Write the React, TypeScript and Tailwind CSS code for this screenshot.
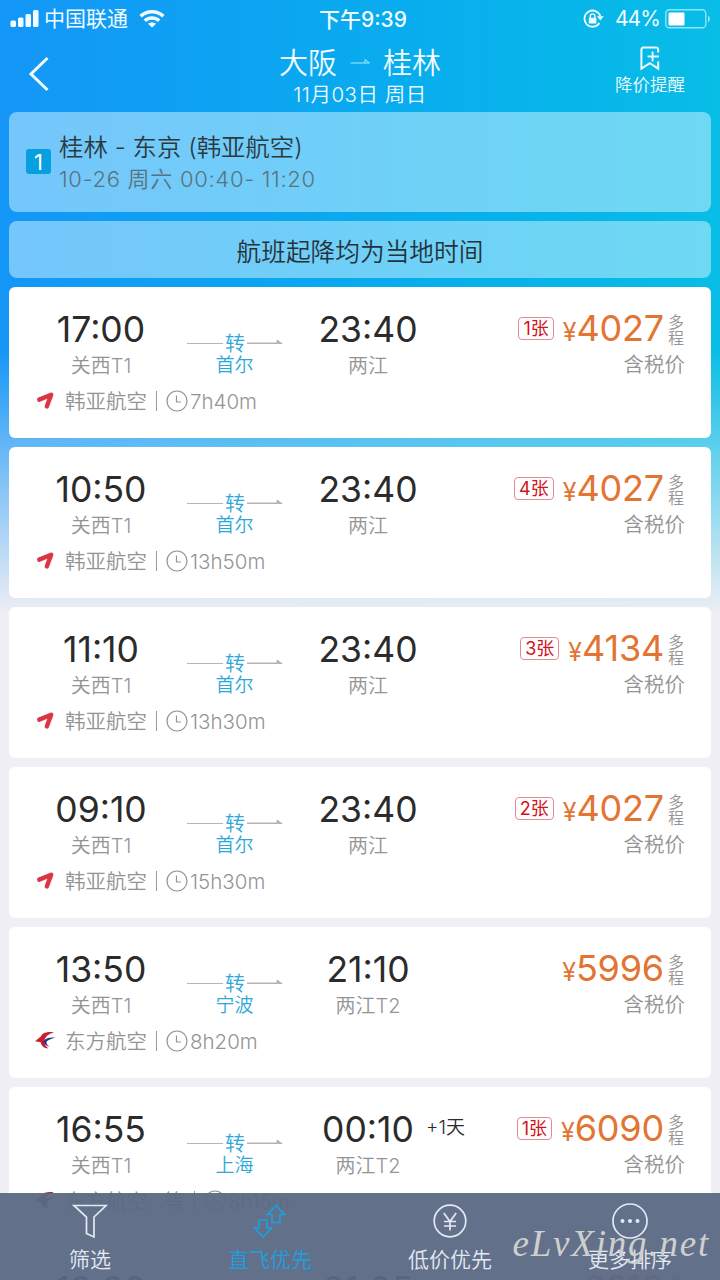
import React from "react";

interface Flight {
  depart: string;
  departAirport: string;
  via: string;
  arrive: string;
  arriveAirport: string;
  nextDay?: boolean;
  tickets?: number;
  price: string;
  airline: string;
  logo: "asiana" | "eastern";
  duration: string;
}

const flights: Flight[] = [
  { depart: "17:00", departAirport: "关西T1", via: "首尔", arrive: "23:40", arriveAirport: "两江", tickets: 1, price: "4027", airline: "韩亚航空", logo: "asiana", duration: "7h40m" },
  { depart: "10:50", departAirport: "关西T1", via: "首尔", arrive: "23:40", arriveAirport: "两江", tickets: 4, price: "4027", airline: "韩亚航空", logo: "asiana", duration: "13h50m" },
  { depart: "11:10", departAirport: "关西T1", via: "首尔", arrive: "23:40", arriveAirport: "两江", tickets: 3, price: "4134", airline: "韩亚航空", logo: "asiana", duration: "13h30m" },
  { depart: "09:10", departAirport: "关西T1", via: "首尔", arrive: "23:40", arriveAirport: "两江", tickets: 2, price: "4027", airline: "韩亚航空", logo: "asiana", duration: "15h30m" },
  { depart: "13:50", departAirport: "关西T1", via: "宁波", arrive: "21:10", arriveAirport: "两江T2", price: "5996", airline: "东方航空", logo: "eastern", duration: "8h20m" },
  { depart: "16:55", departAirport: "关西T1", via: "上海", arrive: "00:10", arriveAirport: "两江T2", nextDay: true, tickets: 1, price: "6090", airline: "东方航空...等", logo: "eastern", duration: "8h15m" },
  { depart: "12:20", departAirport: "关西T1", via: "上海", arrive: "21:05", arriveAirport: "两江T2", price: "6210", airline: "东方航空", logo: "eastern", duration: "8h45m" },
];

const StatusBar = () => (
  <div className="flex h-[37px] items-center justify-between pr-[9px] pl-[10px] text-[20px] leading-none">
    <div className="flex w-[240px] items-center">
      <svg width="29" height="18" viewBox="0 0 29 18" fill="currentColor">
        <rect x="0.5" y="10.5" width="5.5" height="6.5" rx="1.5" />
        <rect x="8" y="7.5" width="5.5" height="9.5" rx="1.5" />
        <rect x="15.5" y="4" width="5.5" height="13" rx="1.5" />
        <rect x="23" y="0" width="5.5" height="17" rx="1.5" />
      </svg>
      <span className="ml-[5px] text-[21px]">中国联通</span>
      <svg className="ml-[11px]" width="26" height="18" viewBox="0 0 26 18" fill="none" stroke="currentColor" strokeWidth="3.4">
        <path d="M1.6 6.2C8 0.3 18 0.3 24.4 6.2" />
        <path d="M5.8 10.8C10 7 16 7 20.2 10.8" />
        <path d="M13 17.5L8.9 13.8C11.2 11.9 14.8 11.9 17.1 13.8Z" fill="currentColor" stroke="none" />
      </svg>
    </div>
    <div className="pt-px pl-[5px] text-[21px] font-medium">下午9:39</div>
    <div className="flex w-[240px] items-center justify-end">
      <svg width="22" height="20" viewBox="0 0 22 20" fill="none" stroke="currentColor" strokeWidth="1.8">
        <path d="M17.3 7.2A8.1 8.1 0 1 0 16.4 14" />
        <path d="M13.8 7.2H20.6L17.4 11.4Z" fill="currentColor" stroke="none" />
        <rect x="5.8" y="8.8" width="7.6" height="5.6" rx="0.6" fill="currentColor" stroke="none" />
        <path d="M7.3 9V7.2a2.3 2.3 0 0 1 4.6 0V9" strokeWidth="1.4" />
      </svg>
      <span className="ml-[10px] text-[21px] tracking-[-0.9px]">44%</span>
      <svg className="ml-[5px]" width="46" height="20" viewBox="0 0 46 20" fill="none">
        <rect x="0.8" y="0.8" width="40" height="18" rx="3.6" stroke="#8be6fa" strokeWidth="1.4" />
        <rect x="3.5" y="3.5" width="16" height="13" rx="1" fill="#fff" />
        <path d="M43 6.5c2.6 1.5 2.6 5.5 0 7Z" fill="#8be6fa" />
      </svg>
    </div>
  </div>
);

const Header = () => (
  <div className="flex h-[75px] items-start justify-between">
    <div className="w-[140px] pt-[19px] pl-[28px]">
      <svg width="22" height="36" viewBox="0 0 22 36" fill="none" stroke="currentColor" strokeWidth="3">
        <path d="M19.5 2L3 18L19.5 34" />
      </svg>
    </div>
    <div className="flex flex-col items-center pt-[2px]">
      <div className="flex h-[46px] items-center pt-[4px] text-[29px] font-[350]">
        <span>大阪</span>
        <svg className="mx-[13px] mb-[5px]" width="20" height="6" viewBox="0 0 20 6" fill="none" stroke="#a5ecff">
          <path d="M0.5 4H19.5L15 0.5V4" />
        </svg>
        <span>桂林</span>
      </div>
      <div className="-mt-[2px] h-[24px] text-[20.5px] leading-[24px] font-[350] tracking-[0.5px]">11月03日 周日</div>
    </div>
    <div className="flex w-[140px] flex-col items-center pt-[9px]">
      <svg width="22" height="25" viewBox="0 0 22 25" fill="none" stroke="currentColor" strokeWidth="2">
        <path d="M19.2 6.5V3.4a1.8 1.8 0 0 0-1.8-1.8H4.2a1.8 1.8 0 0 0-1.8 1.8V22.7L10.8 17.2L19.2 22.7V15.5" />
        <path d="M13.6 5.5V15.5M8.6 10.5H20" strokeWidth="1.8" />
      </svg>
      <span className="mt-[2px] text-[17.5px] leading-[24px] font-[350]">降价提醒</span>
    </div>
  </div>
);

const AirlineLogo = ({ logo }: { logo: Flight["logo"] }) =>
  logo === "asiana" ? (
    <svg width="21" height="20" viewBox="0 0 21 20" fill="none" stroke="#dc3545" strokeWidth="4.4" strokeLinejoin="round" strokeLinecap="round">
      <path d="M4.2 8.6L16.2 3.8L11.8 15.4" />
    </svg>
  ) : (
    <svg width="21" height="20" viewBox="0 0 21 20">
      <path d="M19 1.3C14 0.8 8 1 5.8 5.4L0 10.2L5.6 11.2C6.4 15 9 17.2 13.5 17.4C10.6 15.2 9 12.8 9.3 10.3C9.7 6 13.5 3 19 1.3Z" fill="#c8202b" />
      <path d="M20.5 6.6C15 6.2 9.5 7.6 8.6 10.6C8.6 13 11 14.8 14.4 15.7C11.6 13.2 10.6 11.4 12.2 10C14 8.4 17.5 7.9 20.5 6.6Z" fill="#2b2f86" />
    </svg>
  );

const Transfer = ({ city }: { city: string }) => (
  <div className="flex w-[96px] flex-col items-center text-[19px] leading-[22px] font-[350] text-[#2ba8d8]">
    <div className="flex items-center">
      <span className="h-[1.5px] w-[36px] bg-[#b5b5b5]" />
      <span className="mr-[2px] ml-[2px] pt-px text-[20px]">转</span>
      <svg width="36" height="7" viewBox="0 0 36 7" fill="#b5b5b5">
        <path d="M0 2.4H29.5V-1L36 3.9H0Z" />
      </svg>
    </div>
    <span className="mr-px">{city}</span>
  </div>
);

const FlightCard = ({ flight }: { flight: Flight }) => (
  <div className="h-[151px] shrink-0 rounded-md bg-white pt-[23px] text-[#949494]">
    <div className="flex">
      <div className="flex w-[184px] flex-col items-center">
        <span className="text-[35.5px] leading-[39px] text-[#2b2b2b]">{flight.depart}</span>
        <span className="mt-[5px] text-[20px] leading-[24px] font-[350]">{flight.departAirport}</span>
      </div>
      <div className="-ml-[6px] pt-[22px]">
        <Transfer city={flight.via} />
      </div>
      <div className="relative ml-[5px] flex w-[160px] flex-col items-center">
        <span className="text-[35.5px] leading-[39px] text-[#2b2b2b]">{flight.arrive}</span>
        <span className="mt-[5px] text-[20px] leading-[24px] font-[350]">{flight.arriveAirport}</span>
        {flight.nextDay && (
          <span className="absolute top-[6px] left-[138px] text-[19px] leading-[24px] font-[350] whitespace-nowrap text-[#2b2b2b]">+1天</span>
        )}
      </div>
      <div className="flex flex-1 flex-col items-end pr-[26px]">
        <div className="flex h-[40px] items-center">
          {flight.tickets && (
            <span className="mr-[9px] mb-[3px] flex h-[23px] items-center rounded-[4px] border border-[#e58a90] px-[4px] pt-px text-[18px] leading-none text-[#cf1322]">
              {flight.tickets}张
            </span>
          )}
          <span className="flex items-baseline text-[#e37431]">
            <span className="text-[25px] leading-[36px]">¥</span>
            <span className="text-[36px] leading-[36px] tracking-[-0.2px]">{flight.price}</span>
          </span>
          <span className="ml-[4px] w-[17px] text-[16px] leading-[16px] font-[350]">多程</span>
        </div>
        <span className="mt-[3px] text-[20.5px] leading-[24px] font-[350]">含税价</span>
      </div>
    </div>
    <div className="mt-[11px] flex h-[24px] items-center pl-[26px] text-[20.5px] leading-[24px] font-[350]">
      <AirlineLogo logo={flight.logo} />
      <span className="ml-[9px] pt-[2px]">{flight.airline}</span>
      <span className="mx-[9px] h-[20px] w-px bg-[#999]" />
      <svg width="22" height="22" viewBox="0 0 22 22" fill="none" stroke="#949494" strokeWidth="1.2">
        <circle cx="11" cy="11" r="10" />
        <path d="M10.5 5.5V12H15" />
      </svg>
      <span className="ml-[2px] pt-px">{flight.duration}</span>
    </div>
  </div>
);

const tabs = [
  {
    label: "筛选",
    icon: (
      <path d="M2 2.5H34L22 14V34L14.5 30.5V14Z" />
    ),
  },
  {
    label: "直飞优先",
    active: true,
    icon: (
      <>
        <path d="M24 2.5L32.5 11.5H28V19.5H20V11.5H15.5Z" />
        <path d="M11 34L2.5 25H7V17H15V25H19.5Z" />
      </>
    ),
  },
  {
    label: "低价优先",
    icon: (
      <>
        <circle cx="18" cy="18" r="15.8" />
        <path d="M11.8 10L18 18.5L24.2 10M18 18.5V27.5M12 18.5H24M12 23H24" />
      </>
    ),
  },
  {
    label: "更多排序",
    icon: (
      <>
        <circle cx="18" cy="18" r="17" />
        <g fill="currentColor" stroke="none">
          <circle cx="10.5" cy="18" r="2" />
          <circle cx="18" cy="18" r="2" />
          <circle cx="25.5" cy="18" r="2" />
        </g>
      </>
    ),
  },
];

const TabBar = () => (
  <div className="absolute inset-x-0 bottom-0 flex h-[87px] bg-[rgba(90,104,132,0.95)]">
    {tabs.map((tab) => (
      <div
        key={tab.label}
        className={`flex flex-1 flex-col items-center pt-[10px] ${tab.active ? "text-[#1d9fe0]" : "text-[#e4eaf4]"}`}
      >
        <svg width="36" height="36" viewBox="0 0 36 36" fill="none" stroke="currentColor" strokeWidth="1.7" overflow="visible">
          {tab.icon}
        </svg>
        <span className="mt-[8px] text-[21px] leading-[26px] font-[350]">{tab.label}</span>
      </div>
    ))}
    <span className="absolute right-[10px] bottom-[12px] font-['Liberation_Serif',cursive] text-[37px] leading-[48px] tracking-[1.8px] text-[#cfcfcf] italic">
      eLvXing.net
    </span>
  </div>
);

export default function App() {
  return (
    <div className="relative h-[1280px] w-[720px] overflow-hidden bg-[#f0eff5] font-[Inter,'Noto_Sans_CJK_SC',sans-serif]">
      <div className="absolute inset-x-0 top-0 h-[620px] bg-linear-to-r from-[#1496f7] to-[#08bde6] mask-[linear-gradient(to_bottom,black_350px,transparent_615px)]" />
      <div className="relative text-[#f0fcff]">
        <StatusBar />
        <Header />
      </div>
      <div className="relative flex flex-col gap-[9px] px-[9px]">
        <div className="flex h-[100px] items-start rounded-lg bg-[#d5f5ff]/50 pt-[19px] pl-[17px]">
          <span className="mt-[18px] flex size-[25px] items-center justify-center rounded-[3px] bg-[#069fe0] text-[22px] leading-none text-white">1</span>
          <div className="ml-[8px] flex flex-col text-[#2b3a42]">
            <span className="text-[24.4px] leading-[32px] font-[350]">桂林 - 东京 (韩亚航空)</span>
            <span className="text-[22px] leading-[33px] font-[350] tracking-[0.7px] text-[#59727f]">10-26 周六 00:40- 11:20</span>
          </div>
        </div>
        <div className="flex h-[57px] items-center justify-center rounded-lg bg-[#d5f5ff]/50 pt-[7px] text-[24.7px] font-[350] text-[#24333b]">
          航班起降均为当地时间
        </div>
        {flights.map((flight, index) => (
          <FlightCard key={index} flight={flight} />
        ))}
      </div>
      <TabBar />
    </div>
  );
}
